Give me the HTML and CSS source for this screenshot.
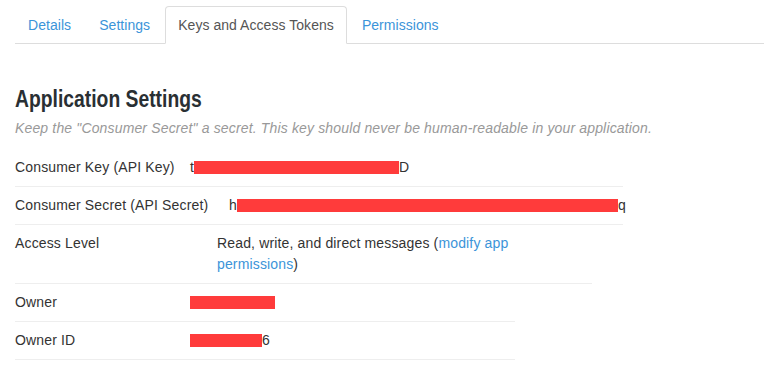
FILE: index.html
```html
<!DOCTYPE html>
<html>
<head>
<meta charset="utf-8">
<link rel="stylesheet" href="styles.css">
</head>
<body>
<ul class="tabs">
  <li><a class="tab">Details</a></li>
  <li><a class="tab">Settings</a></li>
  <li><a class="tab active">Keys and Access Tokens</a></li>
  <li><a class="tab">Permissions</a></li>
</ul>
<div class="content">
  <h2 class="title">Application Settings</h2>
  <p class="note">Keep the "Consumer Secret" a secret. This key should never be human-readable in your application.</p>

  <div class="row row-wide">
    <div class="label label-175">Consumer Key (API Key)</div>
    <div class="value">t<span class="redact r-key"></span>D</div>
  </div>
  <div class="row row-wide">
    <div class="label label-214">Consumer Secret (API Secret)</div>
    <div class="value">h<span class="redact r-secret"></span>q</div>
  </div>
  <div class="row row-mid">
    <div class="label label-202">Access Level</div>
    <div class="value value-wrap">Read, write, and direct messages (<a class="link">modify app</a><br><a class="link">permissions</a>)</div>
  </div>
  <div class="row row-narrow">
    <div class="label label-175">Owner</div>
    <div class="value"><span class="redact r-owner"></span></div>
  </div>
  <div class="row row-narrow">
    <div class="label label-175">Owner ID</div>
    <div class="value"><span class="redact r-id"></span>6</div>
  </div>
</div>
</body>
</html>
```

FILE: styles.css
```css
body {
  margin: 0;
  background: #fff;
  font-family: "Liberation Sans", Arial, sans-serif;
  font-size: 14px;
  letter-spacing: 0.15px;
  color: #333;
}

.tabs {
  list-style: none;
  margin: 6px 0 0 15px;
  padding: 0;
  display: flex;
  border-bottom: 1px solid #ddd;
  letter-spacing: 0.05px;
}

.tabs li {
  margin-right: 2px;
  margin-bottom: -1px;
}

.tab {
  display: block;
  padding: 8px 12px;
  line-height: 20px;
  border: 1px solid transparent;
  border-radius: 4px 4px 0 0;
  color: #3b94d9;
  cursor: pointer;
}

.tab.active {
  color: #555;
  border-color: #ddd;
  border-bottom-color: #fff;
  background: #fff;
}

.content {
  padding-left: 15px;
}

.title {
  margin: 41px 0 0;
  font-family: "Liberation Sans", sans-serif;
  font-weight: bold;
  font-size: 24px;
  line-height: 28px;
  letter-spacing: 0;
  color: #292f33;
  transform: scaleX(0.805);
  transform-origin: left center;
}

.note {
  margin: 5px 0 11px;
  font-style: italic;
  color: #999;
  line-height: 20px;
}

.row {
  display: flex;
  padding: 8px 0;
  line-height: 21px;
  border-bottom: 1px solid #eee;
}

.row-wide { width: 608px; }
.row-mid { width: 577px; }
.row-narrow { width: 500px; }

.label { flex: none; }
.label-175 { width: 175px; }
.label-214 { width: 214px; }
.label-202 { width: 202px; }

.value { white-space: nowrap; }

.link {
  color: #3b94d9;
  cursor: pointer;
}

.redact {
  display: inline-block;
  height: 13px;
  vertical-align: -2px;
  background: #ff3b3b;
}

.r-key { width: 205px; }
.r-secret { width: 381px; }
.r-owner { width: 85px; }
.r-id { width: 72px; }
```
